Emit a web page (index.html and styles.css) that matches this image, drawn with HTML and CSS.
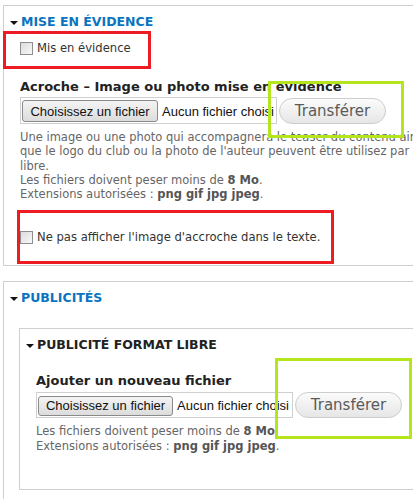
FILE: index.html
```html
<!DOCTYPE html>
<html lang="fr">
<head>
<meta charset="utf-8">
<title>Mise en évidence</title>
<link rel="stylesheet" href="styles.css">
</head>
<body>
<div class="page">
  <section class="fs">
    <div class="legend blue"><span class="tri"></span>MISE EN ÉVIDENCE</div>
    <label class="check first"><input type="checkbox" class="cb"><span>Mis en évidence</span></label>
    <div class="flabel">Acroche – Image ou photo mise en évidence</div>
    <div class="filerow">
      <div class="file"><span class="choose">Choisissez un fichier</span><span class="none">Aucun fichier choisi</span></div>
      <button class="upload" type="button">Transférer</button>
    </div>
    <div class="desc">
      <div>Une image ou une photo qui accompagnera le teaser du contenu ainsi</div>
      <div>que le logo du club ou la photo de l'auteur peuvent être utilisez par</div>
      <div>libre.</div>
      <div>Les fichiers doivent peser moins de <b>8 Mo</b>.</div>
      <div>Extensions autorisées : <b>png gif jpg jpeg</b>.</div>
    </div>
    <label class="check second"><input type="checkbox" class="cb"><span>Ne pas afficher l'image d'accroche dans le texte.</span></label>
  </section>

  <section class="fs fs2">
    <div class="legend blue"><span class="tri"></span>PUBLICITÉS</div>
    <section class="inner">
      <div class="legend dark"><span class="tri"></span>PUBLICITÉ FORMAT LIBRE</div>
      <div class="flabel add">Ajouter un nouveau fichier</div>
      <div class="filerow row2">
        <div class="file"><span class="choose">Choisissez un fichier</span><span class="none">Aucun fichier choisi</span></div>
        <button class="upload" type="button">Transférer</button>
      </div>
      <div class="desc desc2">
        <div>Les fichiers doivent peser moins de <b>8 Mo</b>.</div>
        <div>Extensions autorisées : <b>png gif jpg jpeg</b>.</div>
      </div>
    </section>
  </section>

  <div class="mark red r1"></div>
  <div class="mark red r2"></div>
  <div class="mark green g1"></div>
  <div class="mark green g2"></div>
</div>
</body>
</html>
```

FILE: styles.css
```css
html, body {
  margin: 0;
  padding: 0;
  overflow: hidden;
  background: #fff;
}
body {
  font-family: "DejaVu Sans", Verdana, sans-serif;
  color: #333;
  width: 413px;
  height: 499px;
}
.page {
  position: relative;
  box-sizing: border-box;
  padding: 5px 0 0 3px;
  width: 413px;
  height: 499px;
  overflow: hidden;
}
.fs {
  box-sizing: border-box;
  width: 410px;
  overflow: hidden;
  border: 1px solid #cfcfcf;
  border-right: none;
  padding: 8px 0 20px 16px;
}
.fs2 {
  margin-top: 15px;
  padding-bottom: 40px;
}
.legend {
  display: flex;
  align-items: center;
  margin-left: -10px;
  font-size: 12.5px;
  font-weight: bold;
  line-height: 16px;
  height: 16px;
  white-space: nowrap;
}
.legend.blue { color: #0a74c0; }
.legend.dark { color: #222; }
.tri {
  width: 0;
  height: 0;
  border-left: 4px solid transparent;
  border-right: 4px solid transparent;
  border-top: 4px solid #111;
  margin-right: 3px;
  margin-top: 1px;
}
.check {
  display: flex;
  align-items: center;
  font-size: 11.6px;
  line-height: 16px;
  color: #333;
  white-space: nowrap;
}
.check.first { margin-top: 10px; }
.check.second { margin-top: 28px; }
.cb {
  appearance: none;
  -webkit-appearance: none;
  width: 13px;
  height: 13px;
  margin: 0 4px 0 0;
  border: 1px solid #8e8e8e;
  background: linear-gradient(135deg, #dcdcdc, #f8f8f8);
  box-sizing: border-box;
  flex: none;
}
.flabel {
  font-size: 13px;
  font-weight: bold;
  line-height: 16px;
  margin-top: 23px;
  color: #222;
  white-space: nowrap;
}
.filerow {
  display: flex;
  align-items: center;
  margin-top: 2px;
}
.file {
  width: 257px;
  height: 27px;
  flex: none;
  box-sizing: border-box;
  border: 1px solid #cfcfcf;
  padding: 1px 0 0 1px;
  display: flex;
  align-items: center;
  overflow: hidden;
  white-space: nowrap;
  font-family: "Liberation Sans", Arial, sans-serif;
  font-size: 13px;
  color: #111;
}
.choose {
  box-sizing: border-box;
  width: 136px;
  height: 22px;
  border: 1px solid #8a8a8a;
  border-radius: 3px;
  background: linear-gradient(#f4f4f4, #dcdcdc);
  display: flex;
  align-items: center;
  justify-content: center;
  flex: none;
}
.none {
  margin-left: 4px;
}
.upload {
  flex: none;
  margin-left: 2px;
  width: 107px;
  height: 26px;
  border: 1px solid #cdcdcd;
  border-radius: 13px;
  background: linear-gradient(#fbfbfb, #e6e6e6);
  font-family: "DejaVu Sans", Verdana, sans-serif;
  font-size: 15px;
  color: #5a5a5a;
  padding: 0;
}
.desc {
  margin-top: 6px;
  font-size: 11.5px;
  line-height: 14.3px;
  color: #666;
  white-space: nowrap;
}
.desc b { color: #555; }
.inner {
  margin: 22px 0 0 -1px;
  border: 1px solid #cfcfcf;
  border-right: none;
  padding: 8px 0 36px 16px;
}
.flabel.add { margin-top: 20px; }
.row2 { margin-top: 3px; }
.row2 .file { height: 26px; }
.row2 .choose { height: 20px; width: 135px; }
.desc2 { margin-top: 6px; }

.mark {
  position: absolute;
  box-sizing: border-box;
  border-style: solid;
  border-width: 3px;
}
.red { border-color: #ed1c24; }
.green { border-color: #b5e61d; }
.r1 { left: 3px; top: 31px; width: 148px; height: 38px; }
.r2 { left: 17px; top: 210px; width: 317px; height: 54px; }
.g1 { left: 268px; top: 81px; width: 136px; height: 57px; }
.g2 { left: 275px; top: 358px; width: 137px; height: 81px; }
```
